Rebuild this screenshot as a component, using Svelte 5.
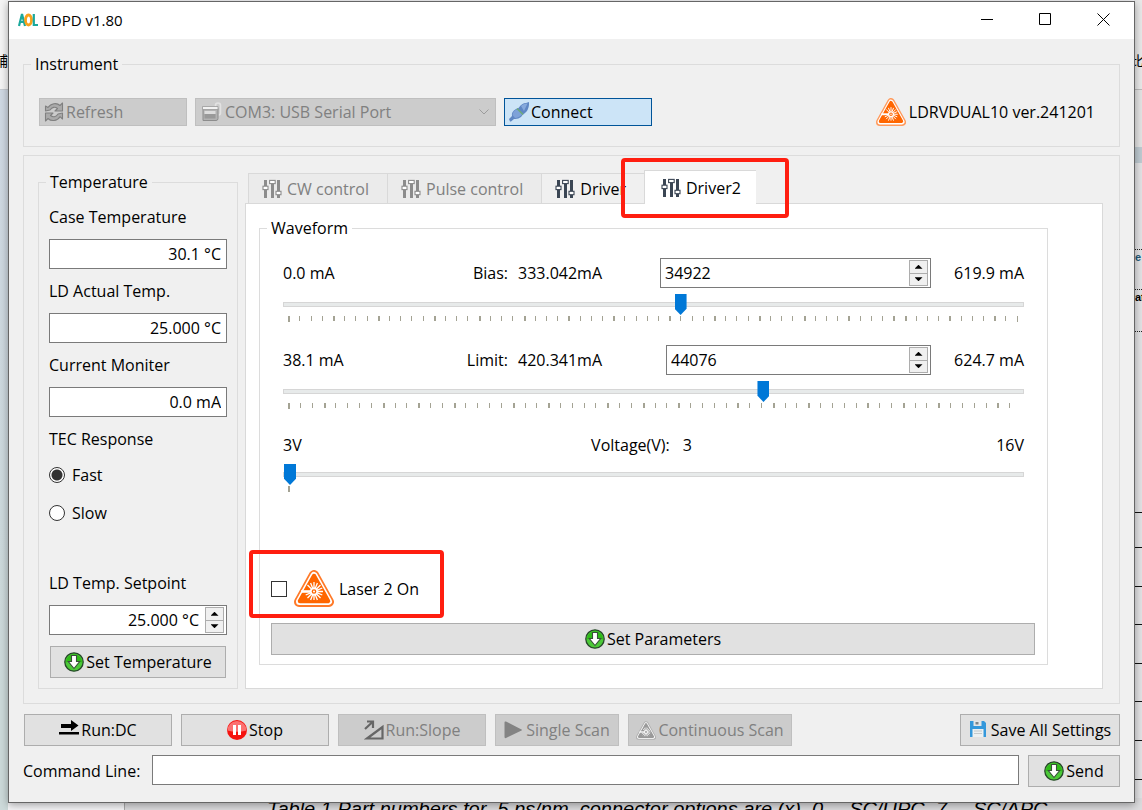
<script>
  const tabs = [
    { name: 'CW control', disabled: true },
    { name: 'Pulse control', disabled: true },
    { name: 'Driver', disabled: false },
    { name: 'Driver2', disabled: false }
  ];
  let active = $state('Driver2');

  const readings = [
    { id: 'case', label: 'Case Temperature', value: '30.1 °C' },
    { id: 'actual', label: 'LD Actual Temp.', value: '25.000 °C' },
    { id: 'current', label: 'Current Moniter', value: '0.0 mA' }
  ];
  let response = $state('Fast');

  const channels = [
    {
      id: 'bias', low: '0.0 mA', name: 'Bias:', value: '333.042mA', high: '619.9 mA',
      raw: 34922, min: 0, max: 65000, steps: 65, end: 99,
      wide: [0, 4, 8, 13, 17, 21, 25, 29, 34, 38, 42, 46, 50, 54, 55, 59, 63]
    },
    {
      id: 'limit', low: '38.1 mA', name: 'Limit:', value: '420.341mA', high: '624.7 mA',
      raw: 44076, min: 4000, max: 65535, steps: 61, end: 98,
      wide: [0, 3, 8, 11, 14, 19, 22, 27, 30, 33, 38, 41, 44, 49, 52, 55, 60]
    }
  ];

  const ticks = (c) =>
    Array.from({ length: c.steps + 1 }, (_, i) => ({
      x: 0.7 + (i * (c.end - 0.7)) / c.steps,
      w: c.wide.includes(i) ? 2 : 1,
      h: i === 0 || (i === 65) ? 6 : 5
    }));

  const dots = [249, 289, 331];
  const rules = [512, 547, 586, 624, 663, 701, 740, 779];
</script>

{#snippet mixer()}
  <svg class="i20" viewBox="0 0 20 20" aria-hidden="true">
    <g fill="currentColor">
      <rect x="2" y="1" width="3" height="6" /><rect x="2" y="11" width="3" height="8" />
      <rect x="9" y="5" width="3" height="14" />
      <rect x="15" y="1" width="3" height="11" /><rect x="15" y="16" width="3" height="3" />
    </g>
    <g fill="#fff" stroke="currentColor" stroke-width="1.1">
      <rect x="1" y="7.2" width="5" height="3.4" /><rect x="7.6" y="1.4" width="5.6" height="3.2" />
      <rect x="14" y="12.3" width="5" height="3.4" />
    </g>
  </svg>
{/snippet}

{#snippet laser(cls)}
  <svg class={cls} viewBox="0 0 40 37" aria-hidden="true">
    <path d="M20 5 35 32H5Z" fill="var(--edge)" stroke="var(--edge)" stroke-width="10" stroke-linejoin="round" />
    <path d="M20 5.5 34.5 31.5H5.5Z" fill="#fff" stroke="#fff" stroke-width="7" stroke-linejoin="round" />
    <path d="M20 6 34 31H6Z" fill="var(--fill)" stroke="var(--fill)" stroke-width="4.5" stroke-linejoin="round" />
    <g stroke="#fff" stroke-width="1.7">
      <path d="M7 21.5H18" stroke-width="2.6" />
      <path d="M20 12V18M20 25V30M23.5 21.5H29M22.5 24 26.5 28M22.5 19 26.5 15M17.5 19 13.5 15M17.5 24 13.5 28M21.3 18.2 23.4 13M18.7 18.2 16.6 13M21.3 24.8 23.4 30M18.7 24.8 16.6 30M23.3 20.2 28.3 18M23.3 22.8 28.3 25M16.7 22.8 11.7 25" stroke-width="1.3" />
      <circle cx="20" cy="21.5" r="3.2" fill="var(--fill)" />
    </g>
    <circle cx="20" cy="21.5" r="1" fill="#fff" />
  </svg>
{/snippet}

{#snippet down()}
  <svg class="i20" viewBox="0 0 20 20" aria-hidden="true">
    <circle cx="10" cy="10" r="9.2" fill="#4cc938" stroke="#27472a" stroke-width="1.3" />
    <path d="M1.7 10.5a8.3 8.3 0 0 1 16.6 0Q10 7 1.7 10.5Z" fill="#2fbb18" />
    <path d="M7.5 3.5h5v6h3.2L10 16.5 4.3 9.500H7.500Z" fill="#fff" stroke="#38503a" stroke-width="1.100" />
  </svg>
{/snippet}

{#snippet steppers(name)}
  <span class="steppers">
    <button type="button" aria-label="Increase {name}"><i class="up"></i></button>
    <button type="button" aria-label="Decrease {name}"><i class="dn"></i></button>
  </span>
{/snippet}

<div class="desktop">
  <div class="behind" aria-hidden="true">
    <div class="strip left"><span class="glyph">辅</span></div>
    <div class="strip right">
      <span class="glyph">比</span>
      <span class="word blue">e</span>
      <span class="word second">at</span>
      {#each dots as y}<i class="dot" style="top: {y}px"></i>{/each}
      {#each rules as y}<i class="rule" style="top: {y}px"></i>{/each}
    </div>
    <div class="page">
      <span>Table 1 Part numbers for .5 ns/nm, connector options are (x), 0</span>
      <span>SC/UPC, 7</span>
      <span>SC/APC</span>
    </div>
  </div>

  <div class="window">
    <header>
      <svg class="logo" viewBox="0 0 20 14" aria-hidden="true">
        <path d="M1 13 4 1l3 12M2 9h4" fill="none" stroke="#1aa89c" stroke-width="2.200" />
        <ellipse cx="10.500" cy="7" rx="3" ry="5" fill="none" stroke="#f9a11b" stroke-width="2.800" />
        <path d="M15.800 1v11H20" fill="none" stroke="#1aa89c" stroke-width="2.200" />
      </svg>
      <h1>LDPD v1.80</h1>
      <div class="controls">
        <button type="button" aria-label="Minimize"><svg viewBox="0 0 13 13"><path d="M0 6.500H12" /></svg></button>
        <button type="button" aria-label="Maximize"><svg viewBox="0 0 13 13"><path d="M.5.5H11.500V11.500H.5Z" /></svg></button>
        <button type="button" aria-label="Close"><svg viewBox="0 0 13 13"><path d="M.5.5 12.500 12.500M12.500.5.5 12.500" /></svg></button>
      </div>
    </header>

    <main>
      <fieldset class="instrument">
        <legend>Instrument</legend>
        <div class="port-row">
          <button type="button" class="btn tool" disabled>
            <svg class="i20" viewBox="0 0 20 20" aria-hidden="true">
              <g fill="#aaa" stroke="#808080" stroke-width="1.100" stroke-linejoin="round">
                <path d="M1.500 9V4l2.500 1.500C7 1 13 .5 16 3.500L18.500 1v8H11l2.500-2.500C11 4.500 8 5 6 8Z" />
                <path d="M18.500 11v6L16 14.700C13 19.500 7 19.500 4 16.500L1.500 19v-8H9l-2.500 2.500C9 15.700 12 15 14 12Z" />
              </g>
            </svg>
            Refresh
          </button>
          <div class="combo">
            <svg class="i20" viewBox="0 0 20 20" aria-hidden="true">
              <path d="M13.500 5V3.500q0-2.500 2.500-2.500t2.500 2.500V11q0 2-2 2" fill="none" stroke="#e2e2e2" stroke-width="1.600" />
              <path d="M1 6.500H16v10q0 2-2 2H1Z" fill="#b2b2b2" stroke="#8c8c8c" />
              <path d="M.5 4.500h15.500v3H.5Z" fill="#f2f2f2" stroke="#999" stroke-width=".8" />
              <path d="M2.500 9h11v3h-11Z" fill="#ddd" />
              <path d="M2.500 12h11v4.500h-11Z" fill="#999" />
            </svg>
            <select aria-label="Serial port" disabled><option>COM3: USB Serial Port</option></select>
            <svg class="chev" viewBox="0 0 10 6" aria-hidden="true"><path d="M.5.5 5 5 9.500.5" fill="none" stroke="#9c9c9c" /></svg>
          </div>
          <button type="button" class="btn tool focus">
            <svg class="i20" viewBox="0 0 20 20" aria-hidden="true">
              <path d="M1 19.500 0 17l3-3q-1-4 4-7 1.500-.5 2.500-1Q13 1 17 1l3-1v3q-.5 5-4 8-3 2-4 4-3 2.500-7 2l-3 2.500Z" fill="#5f87c4" />
              <path d="M3.500 13Q4 8.500 8.500 7l5 5Q10 16 6 16Z" fill="#7ea2d8" />
              <path d="M12 4Q14 1.500 18.500 1.500L15 9Z" fill="#86a9dc" />
              <path d="m8 6.500 6 6" stroke="#6dac7a" stroke-width="1.600" />
            </svg>
            Connect
          </button>
          <div class="device">{@render laser('laser-md')}<span>LDRVDUAL10 ver.241201</span></div>
        </div>
      </fieldset>

      <section class="frame">
        <fieldset class="temperature">
          <legend>Temperature</legend>
          {#each readings as r}
            <label class="caption" for={r.id}>{r.label}</label>
            <input class="field right-text" id={r.id} type="text" readonly value={r.value} />
          {/each}
          <span class="caption" id="tec">TEC Response</span>
          <div class="radios" role="radiogroup" aria-labelledby="tec">
            {#each ['Fast', 'Slow'] as option}
              <label><input type="radio" name="response" value={option} bind:group={response} />{option}</label>
            {/each}
          </div>
          <div class="setpoint">
            <label class="caption" for="setpoint">LD Temp. Setpoint</label>
            <div class="spin">
              <input class="right-text" id="setpoint" type="text" value="25.000 °C" />
              {@render steppers('setpoint')}
            </div>
            <button type="button" class="btn tall set-temp">{@render down()}Set Temperature</button>
          </div>
        </fieldset>

        <div class="tabbed">
          <div class="tabs" role="tablist">
            {#each tabs as tab}
              <div class="tab-slot" class:current={active === tab.name}>
                <button
                  type="button" role="tab" class="tab" disabled={tab.disabled}
                  aria-selected={active === tab.name} onclick={() => (active = tab.name)}
                >{@render mixer()}{tab.name}</button>
                {#if tab.name === 'Driver2'}<span class="mark mark-tab"></span>{/if}
              </div>
            {/each}
          </div>

          <div class="panel" role="tabpanel">
            <fieldset class="waveform">
              <legend>Waveform</legend>
              {#each channels as c}
                <div class="channel">
                  <div class="channel-row">
                    <span class="low">{c.low}</span>
                    <label for={c.id}>{c.name}</label>
                    <output>{c.value}</output>
                    <div class="spin" class:narrow={c.id === 'limit'}>
                      <input id={c.id} type="text" inputmode="numeric" value={c.raw} />
                      {@render steppers(c.id)}
                    </div>
                    <span class="high">{c.high}</span>
                  </div>
                  <input type="range" aria-label="{c.id} level" min={c.min} max={c.max} value={c.raw} />
                  <svg class="ticks" aria-hidden="true">
                    {#each ticks(c) as t}<rect x="{t.x}%" y="0" width={t.w} height={t.h} />{/each}
                  </svg>
                </div>
              {/each}
              <div class="channel">
                <div class="voltage-row">
                  <span>3V</span>
                  <span class="voltage"><label for="voltage">Voltage(V):</label><output>3</output></span>
                  <span class="high">16V</span>
                </div>
                <input id="voltage" type="range" min="3" max="16" value="3" />
                <svg class="ticks" aria-hidden="true"><rect x="0.7%" y="0" width="2" height="6" /></svg>
              </div>

              <div class="laser-row">
                <label><input type="checkbox" />{@render laser('laser-lg')}Laser 2 On</label>
                <span class="mark mark-laser"></span>
              </div>
              <button type="button" class="btn tall set-params">{@render down()}Set Parameters</button>
            </fieldset>
          </div>
        </div>
      </section>

      <div class="actions">
        <button type="button" class="btn tall w148">
          <svg class="i20" viewBox="0 0 20 20" aria-hidden="true"><path d="M2 4h10V0l7.500 5.500L12 11V8H2Z" /><path d="M0 12h20v2.500H0Z" /></svg>Run:DC
        </button>
        <button type="button" class="btn tall w148">
          <svg class="i20" viewBox="0 0 20 20" aria-hidden="true">
            <circle cx="10" cy="10" r="10" fill="#f5130f" />
            <path d="M.5 10.500a9.500 9.500 0 0 1 19 0Q10 13 .5 10.500Z" fill="#fb7070" />
            <path d="M6 5h3v10H6ZM11 5h3v10h-3Z" fill="#fff" />
          </svg>Stop
        </button>
        <button type="button" class="btn tall w148" disabled>
          <svg class="i20" viewBox="0 0 20 20" aria-hidden="true">
            <path d="M3 18.500 18.500 7v11.500Z" fill="none" stroke="#666" stroke-width="2.200" />
            <path d="M1 9 8.500 2M3 1.500h6V8" fill="none" stroke="#666" stroke-width="2.200" />
          </svg>Run:Slope
        </button>
        <button type="button" class="btn tall w123" disabled>
          <svg class="i20" viewBox="0 0 20 20" aria-hidden="true"><path d="M.5 2.500Q.5 1 2 1.500l15.500 8q1 .5 0 1L2 18q-1.500.5-1.500-1Z" fill="#838383" /></svg>Single Scan
        </button>
        <button type="button" class="btn tall w163" disabled>{@render laser('laser-sm')}Continuous Scan</button>
        <button type="button" class="btn tall save">
          <svg class="i20" viewBox="0 0 20 20" aria-hidden="true">
            <path d="M1 1h14l2 2v14H1Z" fill="#3498db" />
            <path d="M4.500 1h8v5h-8Z" fill="#e3e6e8" /><path d="M6.500 2h3v2.500h-3Z" fill="#7d8488" />
            <path d="M3.500 9h11v8h-11Z" fill="#ecf0f1" /><path d="M5 11h8M5 13.500h8" stroke="#c3c8ca" />
          </svg>Save All Settings
        </button>
      </div>

      <div class="command">
        <label for="command">Command Line:</label>
        <input class="field" id="command" type="text" />
        <button type="button" class="btn tall send">{@render down()}Send</button>
      </div>
    </main>
  </div>
</div>

<style>
  :global(body) { background: #e6e6e8; }
  .desktop, .desktop * { box-sizing: border-box; }
  .desktop {
    position: relative;
    display: flex;
    min-height: 100vh;
    padding: 1px 7px 7px 8px;
    overflow: hidden;
    font: 16px/24px "Open Sans", "Noto Sans", sans-serif;
    color: #000;
  }
  button, input, select { font: inherit; color: inherit; margin: 0; }

  .behind { position: absolute; inset: 0; background: #f6f6f8; }
  .strip { position: absolute; top: 0; bottom: 0; width: 8px; overflow: hidden; font: 14px/16px "Noto Sans CJK SC", sans-serif; }
  .left { left: 0; background: linear-gradient(#f5f5f5 0 89px, #c7ccd2 89px 90px, #d0d9e4 90px, #cddada 700px); }
  .right { right: 0; background: linear-gradient(#e9e9e9 0 89px, #bbb 89px 90px, #e4e4e4 90px 147px, #bfcbd2 147px 163px, #e3e3e5 163px); }
  .glyph { position: absolute; top: 52px; right: 0; }
  .right .glyph { left: -4px; }
  .word { position: absolute; left: 1px; top: 249px; font: bold 11px/16px "Liberation Sans", sans-serif; }
  .blue { color: #245a78; }
  .second { top: 289px; }
  .dot { position: absolute; width: 8px; border-top: 1px dotted #222; }
  .rule { position: absolute; width: 8px; border-top: 1px solid #111; }
  .page {
    position: absolute;
    top: 798px; left: 124px; right: 0; bottom: 0;
    display: flex;
    gap: 26px;
    padding-left: 142px;
    overflow: hidden;
    white-space: nowrap;
    background: #dcdcde;
    border-left: 1px solid #aaa;
    font: italic 20px/22px "Liberation Sans", sans-serif;
  }

  .window {
    position: relative;
    flex: 1;
    display: flex;
    flex-direction: column;
    min-width: 0;
    border: 1px solid #666;
    background: #f0f0f0;
    box-shadow: 0 2px 8px rgba(0, 0, 0, .35);
  }
  header { display: flex; align-items: center; height: 37px; padding: 0 2px 2px 9px; background: #fff; }
  .logo { width: 20px; height: 14px; margin-right: 5px; }
  h1 { flex: 1; margin: 0; font-size: 15px; font-weight: 400; line-height: 24px; }
  .controls { display: flex; }
  .controls button { display: grid; place-items: center; width: 58px; height: 35px; padding: 0; border: 0; background: none; }
  .controls svg { width: 13px; height: 13px; fill: none; stroke: #000; }

  main { flex: 1; display: flex; flex-direction: column; padding: 13px 14px 15px; }
  fieldset { min-width: 0; margin: 0; padding: 0; border: 1px solid #dcdcdc; }
  legend { padding: 0 4px; line-height: 24px; }
  .i20 { flex: none; width: 20px; height: 20px; }

  .btn {
    display: flex;
    align-items: center;
    justify-content: center;
    gap: 2px;
    height: 28px;
    padding: 0;
    border: 1px solid #adadad;
    background: #e1e1e1;
    white-space: nowrap;
  }
  .btn.tall { height: 32px; }
  .btn:disabled { border-color: #bfbfbf; background: #ccc; color: #808080; }
  .btn.tool { justify-content: flex-start; width: 148px; padding-left: 4px; }
  .btn.focus { border-color: #005499; background: #cce4f7; }

  .instrument { padding: 22px 24px 20px 15px; }
  .instrument legend { margin-left: -8px; }
  .port-row { display: flex; align-items: center; gap: 8px; }
  .combo { display: flex; align-items: center; width: 301px; height: 28px; padding: 0 6px; gap: 3px; border: 1px solid #bfbfbf; background: #ccc; color: #808080; }
  .combo select { flex: 1; min-width: 0; padding: 0; border: 0; appearance: none; background: none; opacity: 1; }
  .chev { width: 10px; height: 6px; }
  .device { display: flex; align-items: center; gap: 3px; margin-left: auto; }
  .laser-md { width: 30px; height: 28px; --edge: #ff9a5c; --fill: #ff6600; }
  .laser-lg { width: 40px; height: 37px; --edge: #ff7a29; --fill: #ff6600; }
  .laser-sm { width: 20px; height: 19px; --edge: #b0b0b0; --fill: #999; }

  .frame { flex: 1; display: flex; gap: 7px; margin-top: 8px; padding: 14px 16px 14px 14px; border: 1px solid #dcdcdc; }
  .temperature { display: flex; flex-direction: column; width: 200px; padding: 1px 10px 10px; }
  .temperature legend { margin-left: -3px; }
  .caption { display: block; line-height: 44px; }
  .field { width: 100%; height: 30px; padding: 0 5px; border: 1px solid #7a7a7a; border-radius: 0; background: #fff; outline: 0; }
  .right-text { text-align: right; }
  .radios { display: flex; flex-direction: column; gap: 10px; }
  .radios label { display: flex; align-items: center; gap: 7px; height: 28px; }
  .radios input { appearance: none; width: 16px; height: 16px; border: 1px solid #333; border-radius: 50%; background: #fff; }
  .radios input:checked { background: radial-gradient(circle, #333 0 5px, #fff 6px); }
  .setpoint { margin-top: auto; }
  .set-temp { width: 176px; margin: 11px auto 0; }

  .spin { display: flex; height: 30px; padding: 1px 2px 1px 4px; border: 1px solid #7a7a7a; background: #fff; }
  .spin input { flex: 1; min-width: 0; padding: 0 6px 0 0; border: 0; background: none; outline: 0; }
  .steppers { display: flex; flex-direction: column; width: 19px; }
  .steppers button { flex: 1; display: grid; place-items: center; padding: 0; border: 1px solid #adadad; background: #f0f0f0; }
  .steppers button + button { border-top: 0; }
  .steppers i { width: 8px; height: 4px; background: #000; }
  .up { clip-path: polygon(50% 0, 100% 100%, 0 100%); }
  .dn { clip-path: polygon(0 0, 100% 0, 50% 100%); }

  .tabbed { flex: 1; display: flex; flex-direction: column; min-width: 0; }
  .tabs { display: flex; align-items: flex-end; height: 33px; padding-left: 3px; }
  .tab-slot { position: relative; height: 30px; }
  .tab { display: flex; align-items: center; gap: 5px; height: 100%; padding: 0 18px 0 13px; border: 1px solid #d9d9d9; border-width: 1px 0 0 1px; background: #f0f0f0; white-space: nowrap; }
  .tab .i20 { color: #3b4654; }
  .tab:disabled { background: #ebebeb; color: #808080; }
  .tab:disabled .i20 { color: #8c8c8c; }
  .current { z-index: 1; height: 34px; margin-bottom: -1px; }
  .current .tab { padding: 0 15px 0 16px; background: #fff; }
  .panel { flex: 1; display: flex; padding: 12px 54px 23px 13px; border: 1px solid #d9d9d9; background: #fff; }
  .waveform { flex: 1; display: flex; flex-direction: column; padding: 18px 12px 9px 11px; }
  .waveform legend { margin-left: -4px; }

  .channel { margin: 0 11px 23px 12px; }
  .channel-row { display: flex; align-items: center; height: 30px; }
  .low { flex: 1; }
  .channel-row output { width: 142px; margin-left: 10px; }
  .channel-row .spin { width: 271px; }
  .channel-row .narrow { width: 265px; margin-left: 6px; }
  .channel-row .high { width: 93px; }
  .high { text-align: right; }
  .voltage-row { display: grid; grid-template-columns: 1fr auto 1fr; height: 26px; line-height: 26px; }
  .voltage { display: flex; gap: 13px; padding-right: 24px; }
  input[type='range'] { display: block; appearance: none; width: 100%; height: 21px; margin: 6px 0 1px; background: none; }
  input[type='range']::-webkit-slider-runnable-track { height: 5px; border: 1px solid #d6d6d6; background: #e7eaea; }
  input[type='range']::-webkit-slider-thumb { appearance: none; width: 12px; height: 21px; margin-top: -9px; background: #0078d7; clip-path: polygon(0 0, 100% 0, 100% 70%, 50% 100%, 0 70%); }
  .ticks { display: block; width: 100%; height: 6px; fill: #a4a394; shape-rendering: crispEdges; }

  .laser-row { position: relative; align-self: flex-start; margin-top: auto; }
  .laser-row label { display: flex; align-items: center; }
  .laser-row input { appearance: none; width: 16px; height: 16px; border: 1px solid #333; background: #fff; }
  .laser-row .laser-lg { margin: 0 5px 0 7px; }
  .set-params { margin-top: 16px; }
  .mark { position: absolute; border: 4px solid #ff1e10; border-radius: 4px; pointer-events: none; }
  .mark-tab { inset: -12px -33px -14px -23px; }
  .mark-laser { inset: -20px -25px -11px -22px; }

  .actions { display: flex; gap: 9px; margin-top: 10px; padding-left: 1px; }
  .w148 { width: 148px; }
  .w123 { width: 124px; }
  .w163 { width: 164px; }
  .save { width: 160px; margin-left: auto; }
  .command { display: flex; align-items: flex-start; gap: 9px; margin-top: 9px; }
  .command label { min-width: 120px; line-height: 32px; white-space: nowrap; }
  .command .field { flex: 1; min-width: 0; }
  .send { width: 92px; }
</style>
